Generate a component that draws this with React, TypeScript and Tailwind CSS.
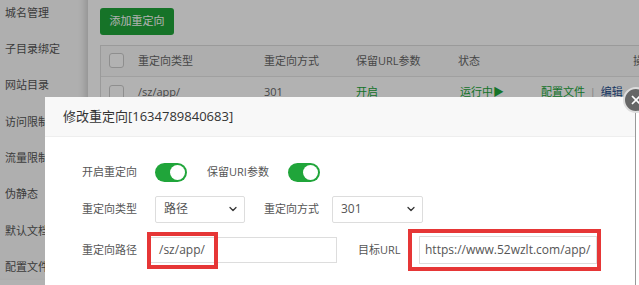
import { ChevronDown, X } from "lucide-react";

const sideItems = ["城名管理", "子目录绑定", "网站目录", "访问限制", "流量限制", "伪静态", "默认文档", "配置文件"];

const Toggle = () => (
  <div className="w-[32px] h-[19px] rounded-full bg-[#20a53a] flex items-center justify-end pr-[2px]">
    <div className="w-[15px] h-[15px] rounded-full bg-white" />
  </div>
);

const Select = ({ value, width }: { value: string; width: string }) => (
  <div className={`${width} h-[27px] border border-[#ddd] rounded-[2px] flex items-center justify-between pl-[8px] pr-[5px] text-[12px] text-[#555]`}>
    <span>{value}</span>
    <ChevronDown size={12} strokeWidth={2.5} color="#333" />
  </div>
);

const Checkbox = () => <div className="w-[15px] h-[15px] border border-[#ccc] rounded-[3px] bg-white" />;

export default function App() {
  return (
    <div className="relative w-[639px] h-[285px] overflow-hidden bg-white font-['Open_Sans','Noto_Sans_CJK_SC',sans-serif]">
      {/* page behind the dialog */}
      <div className="flex h-full">
        <aside className="w-[88px] shrink-0 h-full bg-[#fbfbfb] shadow-[inset_-8px_0_8px_-6px_rgba(0,0,0,0.2)] mt-[-5px]">
          {sideItems.map((item) => (
            <div key={item} className="h-[36.3px] flex items-center pl-[5px] text-[11px] text-[#555] whitespace-nowrap">
              {item}
            </div>
          ))}
        </aside>
        <main className="flex-1 min-w-0 pl-[12px] pt-[7px]">
          <button className="w-[74px] h-[27px] rounded-[3px] bg-[#20a53a] text-white text-[11px]">添加重定向</button>
          <div className="mt-[10px] border-t border-l border-[#ddd] text-[11px] text-[#666] whitespace-nowrap">
            <div className="flex items-center h-[31px] border-b border-[#e5e5e5] bg-[#fafafa]">
              <div className="w-[37px] shrink-0 pl-[8px]"><Checkbox /></div>
              <div className="w-[126px] shrink-0">重定向类型</div>
              <div className="w-[92px] shrink-0">重定向方式</div>
              <div className="w-[102px] shrink-0">保留URL参数</div>
              <div className="w-[83px] shrink-0">状态</div>
              <div className="pl-[92px] shrink-0">操作</div>
            </div>
            <div className="flex items-center h-[31px]">
              <div className="w-[37px] shrink-0 pl-[8px]"><Checkbox /></div>
              <div className="w-[126px] shrink-0">/sz/app/</div>
              <div className="w-[92px] shrink-0">301</div>
              <div className="w-[102px] shrink-0 text-[#20a53a]">开启</div>
              <div className="w-[83px] shrink-0 pl-[2px] text-[#20a53a]">运行中▶</div>
              <div className="shrink-0 text-[#20a53a]">
                配置文件 <span className="text-[#bbb] px-[2px]">|</span> <span className="text-[#1f4f8f]">编辑</span>
              </div>
            </div>
          </div>
        </main>
      </div>

      {/* dim overlay */}
      <div className="absolute inset-0 bg-black/30" />

      {/* dialog */}
      <div className="absolute left-[45px] top-[97px] w-[600px] h-[200px] bg-white flex">
        <div className="w-[590px] shrink-0">
          <div className="h-[40px] bg-[#f8f8f8] border-b border-[#eee] flex items-center pl-[18px] text-[13px] text-[#333]">
            修改重定向[1634789840683]
          </div>
          <div className="pl-[37px] text-[11px] text-[#555]">
            <div className="flex items-center h-[28px] mt-[21px]">
              <div className="w-[73px]">开启重定向</div>
              <Toggle />
              <div className="ml-[20px] w-[81px]">保留URI参数</div>
              <Toggle />
            </div>
            <div className="flex items-center h-[28px] mt-[9px]">
              <div className="w-[73px]">重定向类型</div>
              <Select value="路径" width="w-[90px]" />
              <div className="ml-[19px] w-[68px]">重定向方式</div>
              <Select value="301" width="w-[91px]" />
            </div>
            <div className="flex items-center h-[28px] mt-[13px]">
              <div className="w-[68px]">重定向路径</div>
              <div className="relative">
                <div className="w-[187px] h-[26px] border border-[#ddd] flex items-center pl-[8px] text-[12px] text-[#555]">/sz/app/</div>
                <div className="absolute left-[-3px] top-[-5px] w-[71px] h-[37px] border-[4px] border-[#e63636]" />
              </div>
              <div className="ml-[21px] w-[61px]">目标URL</div>
              <div className="relative">
                <div className="w-[178px] h-[28px] border border-[#ddd] flex items-center pl-[5px] text-[12px] text-[#555]">https://www.52wzlt.com/app/</div>
                <div className="absolute left-[-11px] top-[-7px] w-[193px] h-[42px] border-[4px] border-[#e63636]" />
              </div>
            </div>
          </div>
        </div>
        <div className="flex-1 border-l border-[#999]" />
      </div>

      {/* close button */}
      <div className="absolute left-[623px] top-[87px] w-[26px] h-[26px] rounded-full bg-[#666] border-2 border-[#ddd] flex items-center justify-center">
        <X size={14} strokeWidth={3} color="#fff" />
      </div>
    </div>
  );
}
